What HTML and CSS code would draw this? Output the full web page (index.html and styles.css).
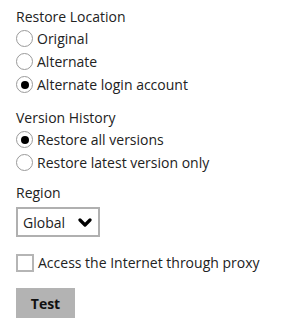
FILE: index.html
```html
<!DOCTYPE html>
<html lang="en">
<head>
    <meta charset="UTF-8">
    <meta name="viewport" content="width=device-width, initial-scale=1.0">
    <title>Restore Settings</title>
    <link rel="stylesheet" href="styles.css">
</head>
<body>

    <div class="group group-location">
        <div class="group-title">Restore Location</div>
        <label class="option">
            <input type="radio" name="location" value="original">
            <span>Original</span>
        </label>
        <label class="option">
            <input type="radio" name="location" value="alternate">
            <span>Alternate</span>
        </label>
        <label class="option">
            <input type="radio" name="location" value="login" checked>
            <span>Alternate login account</span>
        </label>
    </div>

    <div class="group group-version">
        <div class="group-title">Version History</div>
        <label class="option">
            <input type="radio" name="version" value="all" checked>
            <span>Restore all versions</span>
        </label>
        <label class="option">
            <input type="radio" name="version" value="latest">
            <span>Restore latest version only</span>
        </label>
    </div>

    <div class="group group-region">
        <div class="group-title">Region</div>
        <div class="select-wrap">
            <select class="region-select">
                <option>Global</option>
            </select>
            <svg class="chevron" width="14" height="10" viewBox="0 0 14 10">
                <path d="M2 2 L7 7 L12 2" fill="none" stroke="#000" stroke-width="3.2" stroke-linecap="round" stroke-linejoin="round"/>
            </svg>
        </div>
    </div>

    <label class="option proxy">
        <input type="checkbox" name="proxy">
        <span>Access the Internet through proxy</span>
    </label>

    <button class="test-btn">Test</button>

</body>
</html>
```

FILE: styles.css
```css
body {
    font-family: 'Open Sans', 'Liberation Sans', sans-serif;
    font-size: 14px;
    color: #222;
    margin: 0;
    padding: 7px 0 0 16px;
    background-color: #fff;
}

.group-location {
    margin-bottom: 12px;
}

.group-version {
    margin-bottom: 9px;
}

.group-title {
    line-height: 20px;
}

.option {
    display: flex;
    align-items: center;
    height: 23px;
    cursor: pointer;
}

.option input {
    appearance: none;
    -webkit-appearance: none;
    margin: 0 4px 0 0;
    width: 17px;
    height: 17px;
    border: 1.5px solid #9a9a9a;
    border-radius: 50%;
    background-color: #fff;
    box-sizing: border-box;
    display: flex;
    align-items: center;
    justify-content: center;
}

.option input:checked::after {
    content: "";
    width: 8px;
    height: 8px;
    border-radius: 50%;
    background-color: #000;
}

.option input[type="checkbox"] {
    border-radius: 0;
    width: 18px;
    height: 18px;
    border: 2px solid #b5b5b5;
}

.select-wrap {
    position: relative;
    width: 84px;
    margin-top: 4px;
}

.region-select {
    appearance: none;
    -webkit-appearance: none;
    width: 84px;
    height: 30px;
    border: 2px solid #b0b0b0;
    border-radius: 0;
    background-color: #fff;
    font-family: inherit;
    font-size: 14px;
    color: #222;
    padding: 0 0 0 5px;
}

.chevron {
    position: absolute;
    right: 8px;
    top: 11px;
    pointer-events: none;
}

.proxy {
    margin-top: 14px;
}

.test-btn {
    display: block;
    margin-top: 14px;
    width: 59px;
    height: 30px;
    background-color: #b3b3b3;
    border: none;
    border-radius: 0;
    font-family: inherit;
    font-size: 14px;
    font-weight: bold;
    color: #111;
    cursor: pointer;
}
```
